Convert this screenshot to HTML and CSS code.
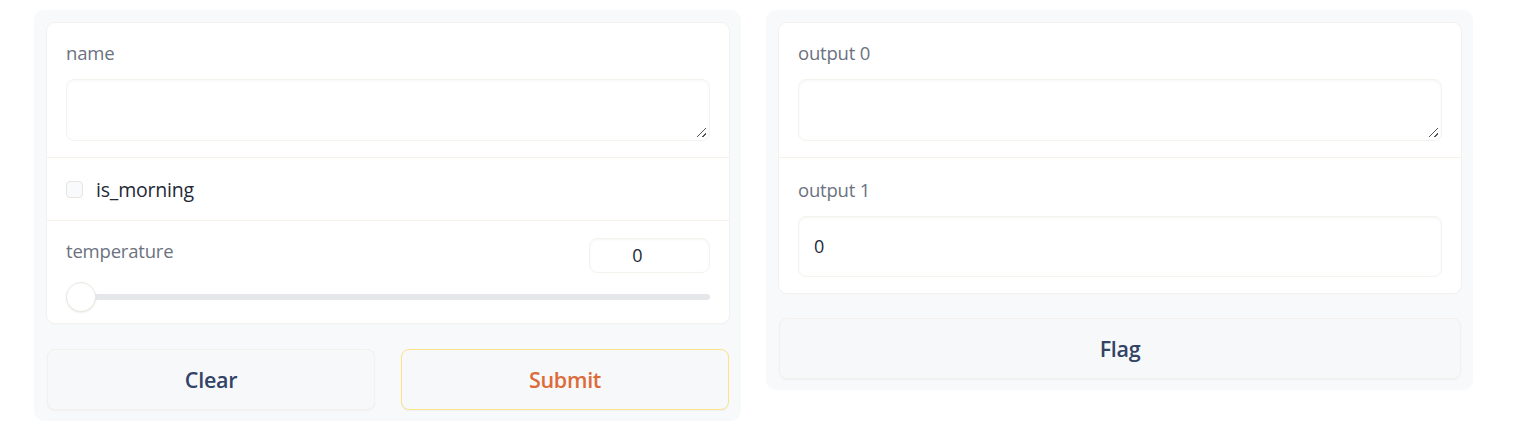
FILE: index.html
```html
<!DOCTYPE html>
<html>
<head>
<meta charset="utf-8">
<link rel="stylesheet" href="styles.css">
</head>
<body>
<div class="app">
  <div class="panel left">
    <div class="card">
      <div class="block">
        <div class="label">name</div>
        <div class="textarea"><span class="grip"></span></div>
      </div>
      <div class="block check-row">
        <span class="checkbox"></span>
        <span class="check-label">is_morning</span>
      </div>
      <div class="block slider-block">
        <div class="slider-head">
          <div class="label">temperature</div>
          <div class="number">0</div>
        </div>
        <div class="slider">
          <div class="track"></div>
          <div class="thumb"></div>
        </div>
      </div>
    </div>
    <div class="buttons">
      <button class="btn secondary">Clear</button>
      <button class="btn primary">Submit</button>
    </div>
  </div>
  <div class="panel right">
    <div class="card">
      <div class="block">
        <div class="label">output 0</div>
        <div class="textarea"><span class="grip"></span></div>
      </div>
      <div class="block second">
        <div class="label">output 1</div>
        <div class="textbox">0</div>
      </div>
    </div>
    <div class="buttons">
      <button class="btn secondary wide">Flag</button>
    </div>
  </div>
</div>
</body>
</html>
```
FILE: styles.css
```css
* { box-sizing: border-box; }
html, body { margin: 0; background: #ffffff; }
body {
  font-family: "Open Sans", "Noto Sans", sans-serif;
  color: #1f2937;
}
.app {
  display: flex;
  gap: 25px;
  padding: 10px 0 0 34px;
  align-items: flex-start;
}
.panel {
  width: 707px;
  background: #f8f9fb;
  border-radius: 10px;
  padding: 13px 12px 11px 13px;
}
.card {
  background: #ffffff;
  border-radius: 8px;
  box-shadow: 0 0 0 1px #f3f1ee, 0 1px 2px rgba(0,0,0,0.04);
}
.block {
  padding: 19px 19px 16px 19px;
  border-top: 1px solid #f6f1ea;
}
.block:first-child { border-top: none; }
.block.second { padding-top: 21px; }
.label {
  font-size: 18.5px;
  color: #6b7280;
  line-height: 22px;
  margin-bottom: 15px;
  letter-spacing: -0.2px;
}
.textarea {
  position: relative;
  height: 62px;
  border-radius: 8px;
  border: 1px solid #f6f3ee;
  box-shadow: inset 0 1px 3px rgba(0,0,0,0.04);
}
.grip {
  position: absolute;
  right: 3px;
  bottom: 3px;
  width: 9px;
  height: 9px;
  background:
    linear-gradient(135deg, transparent 45%, #555 45%, #555 55%, transparent 55%) ,
    linear-gradient(135deg, transparent 75%, #555 75%, #555 85%, transparent 85%);
}
.check-row {
  display: flex;
  align-items: center;
  gap: 13px;
  padding: 19px 19px 18px 19px;
}
.checkbox {
  width: 17px;
  height: 17px;
  border-radius: 4px;
  border: 1px solid #e7e5e0;
  background: #f9fafb;
}
.check-label {
  font-size: 19.5px;
  line-height: 25px;
  color: #1f2937;
  letter-spacing: -0.2px;
}
.slider-block { padding-top: 17px; padding-bottom: 10px; }
.slider-head {
  display: flex;
  justify-content: space-between;
  align-items: flex-start;
}
.slider-head .label { margin-top: 2px; margin-bottom: 0; }
.number {
  width: 121px;
  height: 35px;
  border-radius: 8px;
  border: 1px solid #f6f3ee;
  text-align: center;
  padding-right: 24px;
  font-size: 18px;
  line-height: 33px;
  color: #1f2937;
  box-shadow: inset 0 1px 3px rgba(0,0,0,0.04);
}
.slider {
  position: relative;
  height: 32px;
  margin-top: 8px;
}
.track {
  position: absolute;
  left: 0; right: 0;
  top: 13px;
  height: 6px;
  border-radius: 3px;
  background: #e5e7eb;
}
.thumb {
  position: absolute;
  left: 0;
  top: 1px;
  width: 30px;
  height: 30px;
  border-radius: 50%;
  background: #ffffff;
  border: 1px solid #ece8e0;
  box-shadow: 0 1px 2px rgba(0,0,0,0.08);
}
.textbox {
  height: 61px;
  border-radius: 8px;
  border: 1px solid #f6f3ee;
  padding: 0 15px;
  font-size: 18px;
  line-height: 59px;
  color: #1f2937;
  box-shadow: inset 0 1px 3px rgba(0,0,0,0.04);
}
.buttons {
  display: flex;
  gap: 26px;
  margin-top: 26px;
}
.right .buttons { margin-top: 25px; }
.btn {
  flex: 1;
  height: 61px;
  border-radius: 8px;
  font-family: "Open Sans", "Noto Sans", sans-serif;
  font-size: 21.5px;
  font-weight: 600;
  letter-spacing: -0.3px;
  background: #f7f8fa;
  border: 1px solid #f3f1ea;
  box-shadow: 0 1px 2px rgba(0,0,0,0.04);
  cursor: pointer;
}
.secondary { color: #334366; }
.primary {
  color: #dd6b3a;
  border-color: #fde28a;
}
```
